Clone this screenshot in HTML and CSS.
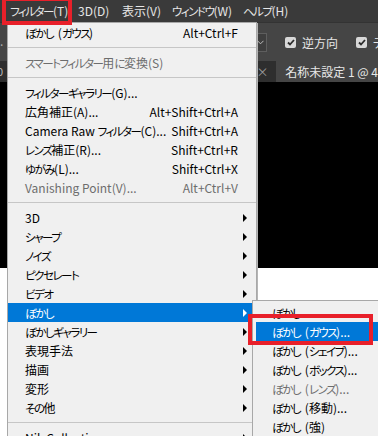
FILE: index.html
```html
<!DOCTYPE html>
<html lang="ja">
<head>
<meta charset="utf-8">
<link rel="stylesheet" href="styles.css">
</head>
<body>
<div class="app">
  <div class="menubar">
    <span class="mb-item mb-filter"><span class="k">フィルター</span>(T)</span>
    <span class="mb-item mb-3d">3D(D)</span>
    <span class="mb-item mb-view">表示(V)</span>
    <span class="mb-item mb-win"><span class="k">ウィンドウ</span>(W)</span>
    <span class="mb-item mb-help"><span class="k">ヘルプ</span>(H)</span>
  </div>
  <div class="options">
    <div class="opt-left"><span class="dot">.</span></div>
    <div class="opt-right">
      <span class="dropbox"><svg width="7" height="5" viewBox="0 0 7 5"><path d="M0.5 0.8 L3.5 3.8 L6.5 0.8" fill="none" stroke="#bdbdbd" stroke-width="1"/></svg></span>
      <span class="vsep"></span>
      <span class="chk"><svg width="8" height="7" viewBox="0 0 8 7"><path d="M1 3.5 L3 5.5 L7 1" fill="none" stroke="#2b2b2b" stroke-width="1.8"/></svg></span>
      <span class="opt-label">逆方向</span>
      <span class="chk"><svg width="8" height="7" viewBox="0 0 8 7"><path d="M1 3.5 L3 5.5 L7 1" fill="none" stroke="#2b2b2b" stroke-width="1.8"/></svg></span>
      <span class="opt-label">テ</span>
    </div>
  </div>
  <div class="tabs">
    <span class="tab-left">0</span>
    <span class="tab-close">×</span>
    <span class="tab">名称未設定 1 @ 4</span>
  </div>
  <div class="canvas"></div>
</div>

<div class="menu">
  <div class="item"><span class="label"><span class="k g">ぼかし</span> (<span class="k">ガウス</span>)</span><span class="key">Alt+Ctrl+F</span></div>
  <div class="sep"></div>
  <div class="item disabled"><span class="label"><span class="k">スマートフィルター</span>用<span class="k">に</span>変換(S)</span></div>
  <div class="sep"></div>
  <div class="item"><span class="label"><span class="k">フィルターギャラリー</span>(G)...</span></div>
  <div class="item"><span class="label">広角補正(A)...</span><span class="key">Alt+Shift+Ctrl+A</span></div>
  <div class="item"><span class="label">Camera Raw <span class="k">フィルター</span>(C)...</span><span class="key">Shift+Ctrl+A</span></div>
  <div class="item"><span class="label"><span class="k">レンズ</span>補正(R)...</span><span class="key">Shift+Ctrl+R</span></div>
  <div class="item"><span class="label"><span class="k">ゆがみ</span>(L)...</span><span class="key">Shift+Ctrl+X</span></div>
  <div class="item disabled"><span class="label">Vanishing Point(V)...</span><span class="key">Alt+Ctrl+V</span></div>
  <div class="sep"></div>
  <div class="item sub"><span class="label">3D</span><span class="arrow"></span></div>
  <div class="item sub"><span class="label"><span class="k">シャープ</span></span><span class="arrow"></span></div>
  <div class="item sub"><span class="label"><span class="k">ノイズ</span></span><span class="arrow"></span></div>
  <div class="item sub"><span class="label"><span class="k">ピクセレート</span></span><span class="arrow"></span></div>
  <div class="item sub"><span class="label"><span class="k">ビデオ</span></span><span class="arrow"></span></div>
  <div class="item sub active"><span class="label"><span class="k">ぼかし</span></span><span class="arrow"></span></div>
  <div class="item sub"><span class="label"><span class="k">ぼかしギャラリー</span></span><span class="arrow"></span></div>
  <div class="item sub"><span class="label">表現手法</span><span class="arrow"></span></div>
  <div class="item sub"><span class="label">描画</span><span class="arrow"></span></div>
  <div class="item sub"><span class="label">変形</span><span class="arrow"></span></div>
  <div class="item sub"><span class="label"><span class="k">その</span>他</span><span class="arrow"></span></div>
  <div class="sep"></div>
  <div class="item sub"><span class="label">Nik Collection</span><span class="arrow"></span></div>
</div>

<div class="submenu">
  <div class="item"><span class="label"><span class="k">ぼかし</span></span></div>
  <div class="item active"><span class="label"><span class="k g">ぼかし</span> (<span class="k">ガウス</span>)...</span></div>
  <div class="item"><span class="label"><span class="k g">ぼかし</span> (<span class="k">シェイプ</span>)...</span></div>
  <div class="item"><span class="label"><span class="k g">ぼかし</span> (<span class="k">ボックス</span>)...</span></div>
  <div class="item disabled"><span class="label"><span class="k g">ぼかし</span> (<span class="k">レンズ</span>)...</span></div>
  <div class="item"><span class="label"><span class="k g">ぼかし</span> (移動)...</span></div>
  <div class="item"><span class="label"><span class="k g">ぼかし</span> (強)</span></div>
</div>

<div class="hl hl-menu"></div>
<div class="hl hl-sub"></div>
</body>
</html>
```

FILE: styles.css
```css
* { box-sizing: border-box; }
html, body {
  margin: 0;
  padding: 0;
}
body {
  width: 378px;
  height: 436px;
  overflow: hidden;
  position: relative;
  background: #ffffff;
  font-family: "Noto Sans CJK JP", "Noto Sans", sans-serif;
  font-feature-settings: "palt";
  font-size: 12px;
}
.k {
  font-size: 11.5px;
  letter-spacing: -1.5px;
}
.k.g { margin-right: 2px; }
.app {
  display: flex;
  flex-direction: column;
}
.menubar {
  height: 22px;
  background: #3a3a3a;
  display: flex;
  align-items: center;
  color: #e6e6e6;
  padding-left: 10px;
  white-space: nowrap;
}
.mb-item { line-height: 22px; }
.mb-filter { width: 68px; }
.mb-3d { width: 44px; }
.mb-view { width: 50px; }
.mb-win { width: 71px; }
.options {
  height: 39px;
  background: #454545;
  border-top: 1px solid #333;
  display: flex;
  align-items: center;
  justify-content: space-between;
  color: #e0e0e0;
  white-space: nowrap;
  overflow: hidden;
}
.opt-left { width: 7px; color: #aaa; }
.dot { position: relative; top: -2px; }
.opt-right {
  width: 121px;
  display: flex;
  align-items: center;
  height: 100%;
  overflow: hidden;
}
.dropbox {
  width: 11px;
  height: 19px;
  border: 1px solid #5e5e5e;
  border-left: none;
  background: #3e3e3e;
  display: flex;
  align-items: center;
  justify-content: center;
  padding-right: 2px;
}
.vsep {
  width: 1px;
  height: 38px;
  background: #2e2e2e;
  margin-left: 8px;
  margin-right: 10px;
}
.chk {
  width: 11px;
  height: 11px;
  background: #d8d8d8;
  border-radius: 2px;
  display: flex;
  align-items: center;
  justify-content: center;
  flex: none;
}
.opt-label {
  margin-left: 6px;
  margin-right: 18px;
  font-size: 12px;
  color: #e6e6e6;
}
.tabs {
  height: 21px;
  background: #2e2e2e;
  display: flex;
  align-items: stretch;
  color: #cfcfcf;
  white-space: nowrap;
  overflow: hidden;
}
.tab-left {
  width: 260px;
  font-size: 11px;
  color: #bbb;
  line-height: 21px;
  text-indent: -3px;
}
.tab-close {
  width: 20px;
  color: #9a9a9a;
  font-size: 12px;
  line-height: 21px;
}
.tab {
  flex: 1;
  background: #454545;
  padding-left: 9px;
  line-height: 21px;
  color: #e8e8e8;
  font-size: 12px;
}
.canvas {
  height: 186px;
  background: #000;
}

/* dropdown menu */
.menu {
  position: absolute;
  left: 7px;
  top: 22px;
  width: 250px;
  background: #f0f0f0;
  border: 1px solid #a8a8a8;
  box-shadow: 1px 1px 0 #b5b5b5;
  padding: 0;
  color: #000;
}
.item {
  height: 19px;
  display: flex;
  align-items: center;
  padding-left: 17px;
  padding-right: 18px;
  white-space: nowrap;
  position: relative;
}
.item .label { flex: 1; }
.item .key { text-align: right; }
.item.disabled { color: #6d6d6d; }
.item.active { background: #0078d7; color: #fff; }
.sep {
  height: 11px;
  display: flex;
  align-items: center;
}
.sep::before {
  content: "";
  display: block;
  height: 1px;
  width: 100%;
  background: #c6c6c6;
}
.arrow {
  width: 0;
  height: 0;
  border-top: 4px solid transparent;
  border-bottom: 4px solid transparent;
  border-left: 4px solid #000;
  margin-right: -9px;
}
.item.active .arrow { border-left-color: #fff; }

.submenu {
  position: absolute;
  left: 252px;
  top: 300px;
  width: 140px;
  background: #f0f0f0;
  border: 1px solid #a8a8a8;
  padding-top: 2px;
  color: #000;
}
.submenu .item { padding-left: 19px; }
.submenu .item.active { margin: 0 3px 0 3px; padding-left: 16px; }

/* red annotation boxes */
.hl {
  position: absolute;
  border: 4px solid #e8202a;
}
.hl-menu { left: 2px; top: -3px; width: 70px; height: 28px; }
.hl-sub { left: 248px; top: 314px; width: 125px; height: 31px; }
```
